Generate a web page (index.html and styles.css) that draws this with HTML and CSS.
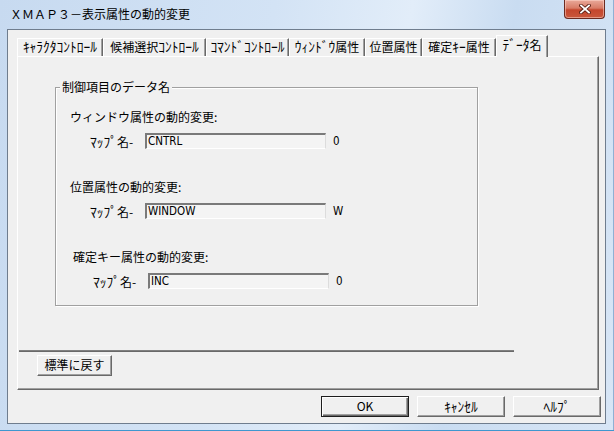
FILE: index.html
```html
<!DOCTYPE html>
<html lang="ja">
<head>
<meta charset="utf-8">
<title>XMAP3</title>
<link rel="stylesheet" href="styles.css">
</head>
<body>
<div class="window">
  <div class="titlebar">
    <span class="title">ＸＭＡＰ３－表示属性の動的変更</span>
    <div class="close">
      <svg width="12" height="10" viewBox="0 0 12 10"><path d="M2 1.5 L10 8.5 M10 1.5 L2 8.5" stroke="#5a1f14" stroke-width="3.6" stroke-linecap="square"/><path d="M2 1.5 L10 8.5 M10 1.5 L2 8.5" stroke="#ffffff" stroke-width="1.8" stroke-linecap="square"/></svg>
    </div>
  </div>
  <div class="client">
    <div class="tabs">
      <div class="tab w1"><span class="hw">ｷｬﾗｸﾀｺﾝﾄﾛｰﾙ</span></div>
      <div class="tab w2">候補選択<span class="hw">ｺﾝﾄﾛｰﾙ</span></div>
      <div class="tab w3"><span class="hw">ｺﾏﾝﾄﾞｺﾝﾄﾛｰﾙ</span></div>
      <div class="tab w4"><span class="hw">ｳｨﾝﾄﾞｳ</span>属性</div>
      <div class="tab w5">位置属性</div>
      <div class="tab w6">確定<span class="hw">ｷｰ</span>属性</div>
      <div class="tab active"><span class="hw">ﾃﾞｰﾀ</span>名</div>
    </div>
    <div class="panel">
      <div class="group">
        <span class="legend">制御項目のデータ名</span>
        <div class="caption">ウィンドウ属性の動的変更:</div>
        <div class="row"><span class="map"><span class="hw">ﾏｯﾌﾟ</span>名-</span><span class="field">CNTRL</span><span class="val">0</span></div>
        <div class="caption">位置属性の動的変更:</div>
        <div class="row"><span class="map"><span class="hw">ﾏｯﾌﾟ</span>名-</span><span class="field">WINDOW</span><span class="val">W</span></div>
        <div class="caption shift">確定キー属性の動的変更:</div>
        <div class="row shift"><span class="map"><span class="hw">ﾏｯﾌﾟ</span>名-</span><span class="field">INC</span><span class="val">0</span></div>
      </div>
      <div class="sep"></div>
      <div class="btn reset">標準に戻す</div>
    </div>
    <div class="actions">
      <div class="btn default">OK</div>
      <div class="btn"><span class="hw">ｷｬﾝｾﾙ</span></div>
      <div class="btn"><span class="hw">ﾍﾙﾌﾟ</span></div>
    </div>
  </div>
</div>
</body>
</html>
```

FILE: styles.css
```css
html, body {
  margin: 0;
  padding: 0;
}
body {
  width: 614px;
  height: 431px;
  overflow: hidden;
  font-family: "Noto Sans CJK JP", "Noto Sans", sans-serif;
  font-size: 12px;
  color: #000;
}
.hw {
  font-size: 13.5px;
}
.window {
  width: 614px;
  height: 431px;
  box-sizing: border-box;
  display: flex;
  flex-direction: column;
  background: linear-gradient(100deg, #c7daf0 0%, #d3e3f5 40%, #e2edf9 60%, #c9dcf1 75%, #d8e6f6 100%);
  box-shadow: inset 0 -1px 0 #3f97cf, inset -1px 0 0 #8fb0d4;
}
.titlebar {
  height: 29px;
  flex: none;
  display: flex;
  justify-content: space-between;
  align-items: flex-start;
  padding-left: 10px;
}
.title {
  margin-top: 6px;
  line-height: 16px;
}
.close {
  width: 41px;
  height: 19px;
  margin-right: 9px;
  box-sizing: border-box;
  border: 1px solid #6b2a20;
  border-top: none;
  border-radius: 0 0 4px 4px;
  background: linear-gradient(#e9a99a 0%, #d87c66 45%, #c4462d 55%, #c9573c 100%);
  box-shadow: inset 0 0 0 1px rgba(255, 220, 210, 0.5);
  display: flex;
  align-items: center;
  justify-content: center;
}
.client {
  flex: none;
  height: 395px;
  margin: 0 8px 7px 7px;
  box-sizing: border-box;
  border: 1px solid #6f7d8e;
  background: #f0f0f0;
  padding: 5px 0 0 9px;
  display: flex;
  flex-direction: column;
}
.tabs {
  display: flex;
  align-items: flex-end;
  height: 21px;
  flex: none;
}
.tab {
  box-sizing: border-box;
  height: 18px;
  line-height: 15px;
  text-align: center;
  white-space: nowrap;
  border-top: 1px solid #fff;
  border-left: 1px solid #fff;
  border-right: 1px solid #696969;
  box-shadow: inset -1px 0 0 #a0a0a0;
}
.w1 { width: 86px; }
.w2 { width: 103px; }
.w3 { width: 83px; }
.w4 { width: 76px; }
.w5 { width: 57px; }
.w6 { width: 74px; }
.tab.active {
  width: 52px;
  height: 22px;
  line-height: 16px;
  margin-bottom: -1px;
  position: relative;
  z-index: 1;
  background: #f0f0f0;
}
.panel {
  box-sizing: border-box;
  width: 582px;
  height: 334px;
  flex: none;
  border-top: 1px solid #fff;
  border-left: 1px solid #fff;
  border-right: 1px solid #696969;
  border-bottom: 1px solid #696969;
  box-shadow: inset -1px -1px 0 #a0a0a0;
  display: flex;
  flex-direction: column;
  align-items: flex-start;
}
.group {
  position: relative;
  box-sizing: border-box;
  width: 423px;
  height: 219px;
  margin: 30px 0 0 37px;
  border: 1px solid #a0a0a0;
  box-shadow: 1px 1px 0 #fff, inset 1px 1px 0 #fff;
  padding-top: 21px;
}
.legend {
  position: absolute;
  top: -9px;
  left: 4px;
  padding: 0 2px;
  line-height: 16px;
  background: #f0f0f0;
}
.caption {
  line-height: 16px;
  margin-left: 14px;
}
.caption.shift {
  margin-left: 17px;
  margin-top: 29px;
}
.row + .caption {
  margin-top: 30px;
}
.row {
  display: flex;
  align-items: center;
  height: 16px;
  margin-top: 8px;
  margin-left: 34px;
}
.row.shift {
  margin-left: 37px;
}
.map {
  width: 55px;
  white-space: nowrap;
  line-height: 16px;
}
.field {
  box-sizing: border-box;
  width: 181px;
  height: 16px;
  background: #f4f4f4;
  border-top: 2px solid #7a7a7a;
  border-left: 2px solid #7a7a7a;
  border-right: 1px solid #dcdcdc;
  border-bottom: 1px solid #fff;
  padding-left: 1px;
  font-family: "Liberation Sans Narrow", "DejaVu Sans Condensed", "Liberation Sans", sans-serif;
  font-size: 11.5px;
  line-height: 13px;
}
.val {
  margin-left: 7px;
  font-family: "Liberation Sans Narrow", "DejaVu Sans Condensed", "Liberation Sans", sans-serif;
  font-size: 11.5px;
  line-height: 16px;
}
.sep {
  width: 495px;
  margin: 44px 0 0 1px;
  border-top: 1px solid #808080;
  border-bottom: 1px solid #696969;
}
.btn {
  box-sizing: border-box;
  height: 21px;
  width: 88px;
  background: #f0f0f0;
  border: 1px solid;
  border-color: #fff #696969 #696969 #fff;
  box-shadow: inset -1px -1px 0 #a0a0a0;
  text-align: center;
  line-height: 18px;
  white-space: nowrap;
}
.btn.reset {
  width: 75px;
  margin: 3px 0 0 19px;
}
.btn.default {
  border: 1px solid #1e1e1e;
  box-shadow: inset 1px 1px 0 #fff, inset -1px -1px 0 #696969, inset -2px -2px 0 #a0a0a0;
}
.actions {
  display: flex;
  justify-content: flex-end;
  gap: 8px;
  margin-top: 6px;
  padding-right: 4px;
}
```
